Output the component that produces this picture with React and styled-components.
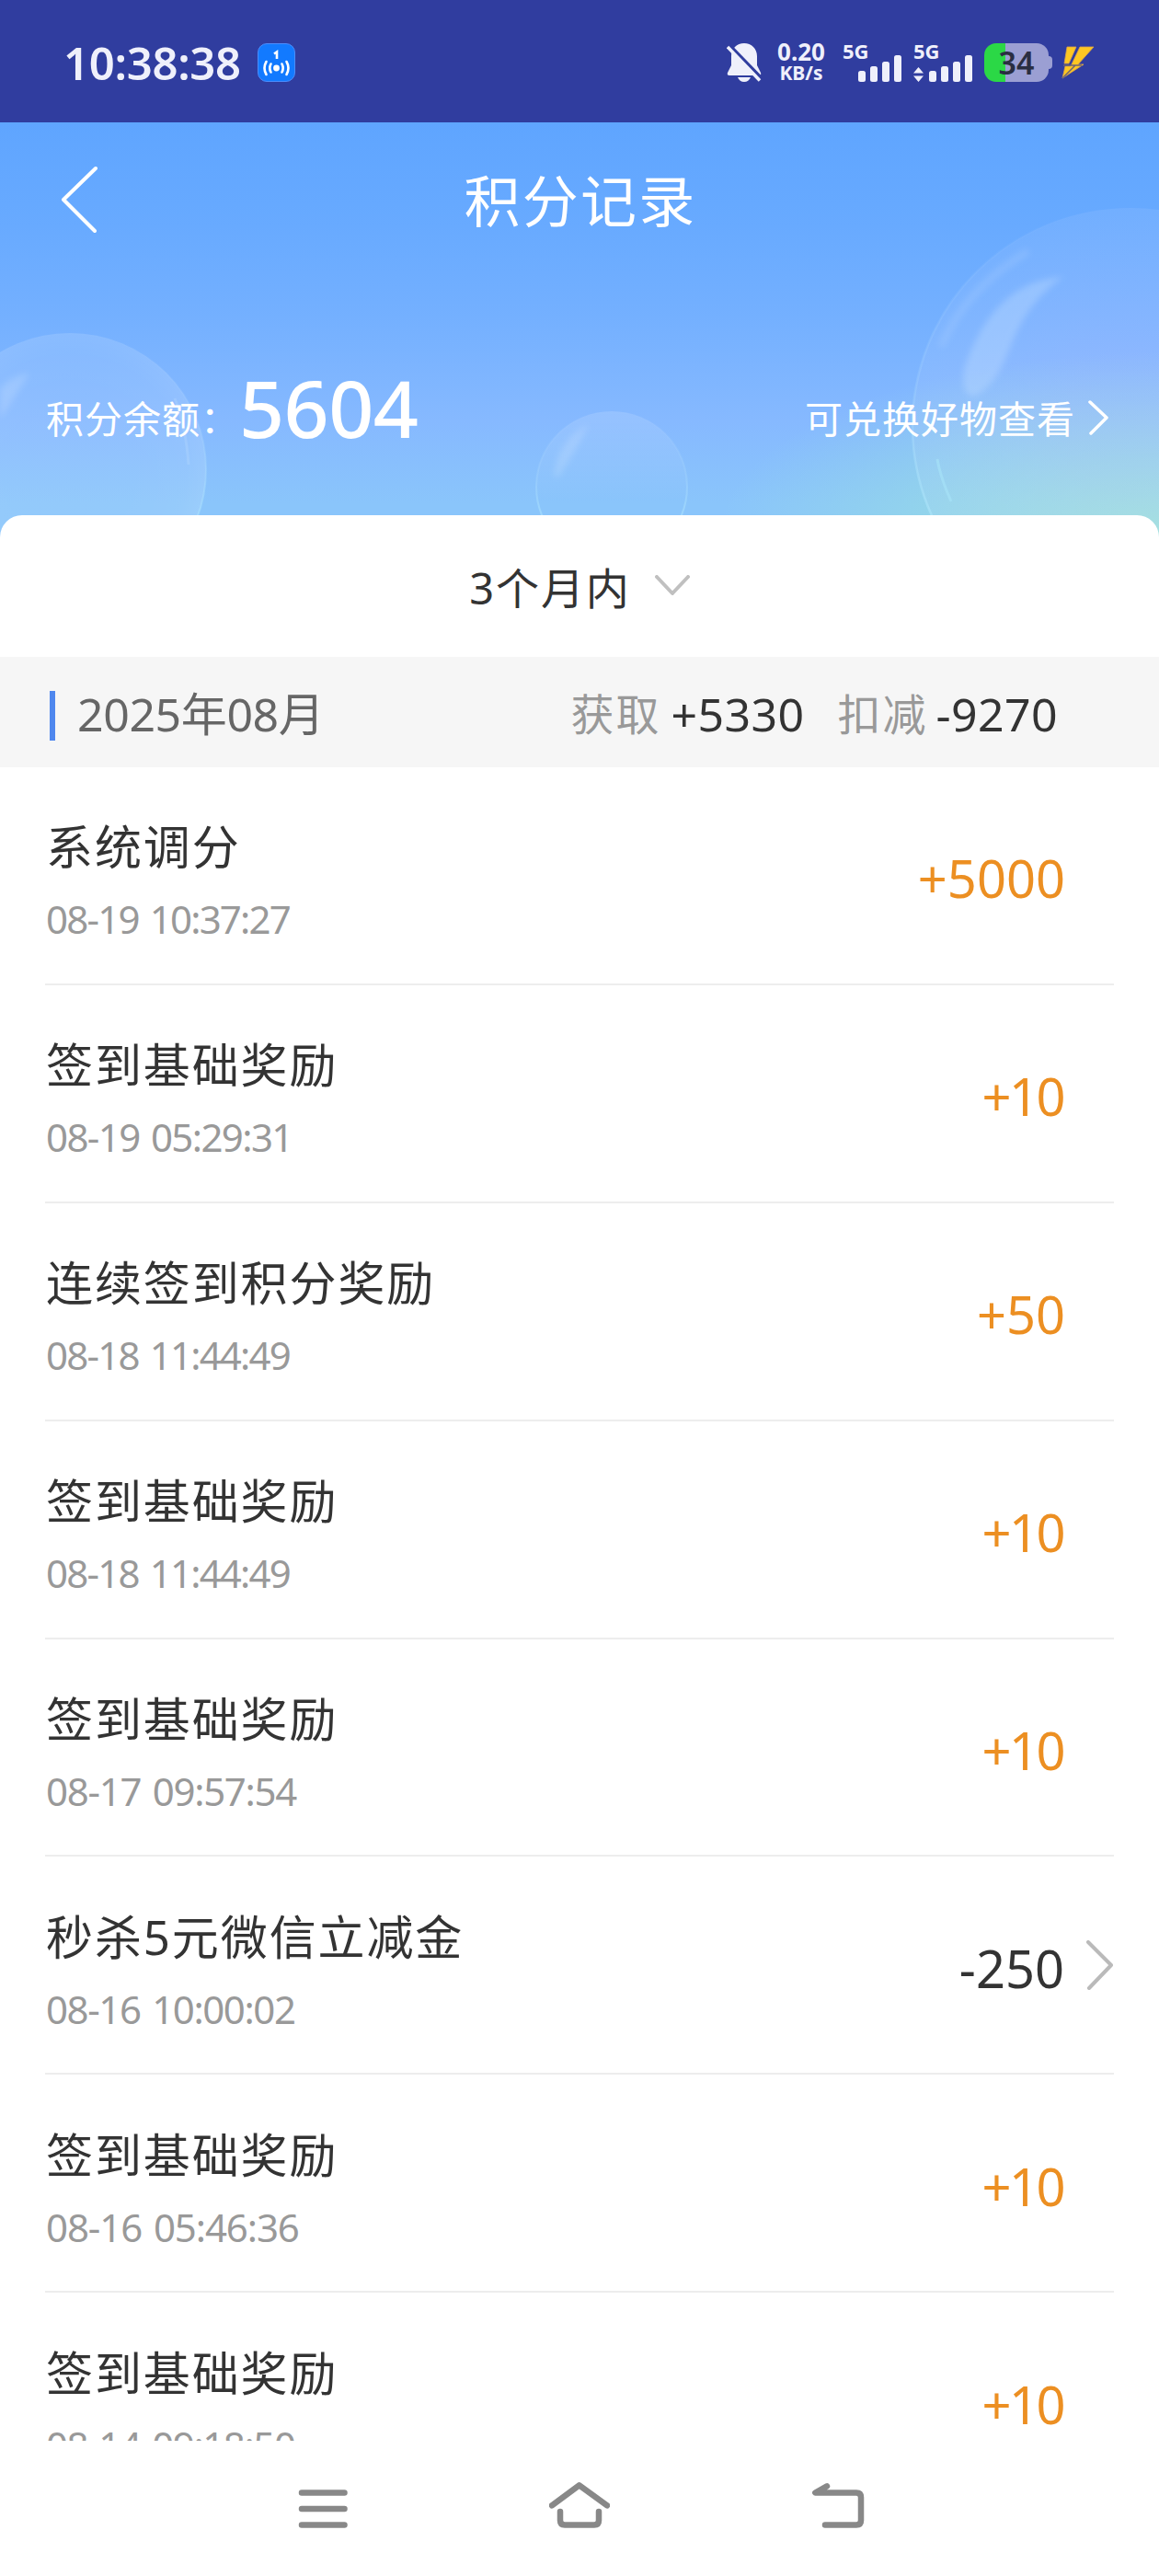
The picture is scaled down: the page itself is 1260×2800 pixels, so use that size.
import React from 'react';
import styled, { createGlobalStyle } from 'styled-components';

const GlobalStyle = createGlobalStyle`
  * { box-sizing: border-box; }
  body {
    margin: 0;
    background: #fff;
    font-family: "Noto Sans", "Noto Sans CJK SC", sans-serif;
    color: #333;
  }
  svg { display: block; flex: none; }
`

const Phone = styled.div`
  width: 1260px;
  height: 2800px;
  display: flex;
  flex-direction: column;
  overflow: hidden;
  background: #fdfdfd;
`

const StatusBar = styled.div`
  height: 133px;
  flex: none;
  display: flex;
  align-items: center;
  padding: 3px 70px 0 69px;
  background: #303d9f;
  color: #eff0fb;
`

const Clock = styled.div`
  width: 211px;
  font-size: 49px;
  font-weight: 600;
  line-height: 60px;
  letter-spacing: -0.3px;
  white-space: nowrap;
`

const AppBadge = styled.div`
  width: 41px;
  height: 42px;
  border-radius: 10px;
  background: #127aff;
  border: 1px solid #4c8dfc;
`

const StatusIcons = styled.div`
  margin-left: auto;
  display: flex;
  align-items: center;
`

const Speed = styled.div`
  width: 56px;
  margin-left: 15px;
  display: flex;
  flex-direction: column;
  align-items: center;
  font-weight: 700;
  white-space: nowrap;
`

const SpeedValue = styled.span`
  height: 22px;
  font-size: 26px;
  line-height: 21px;
`

const SpeedUnit = styled.span`
  height: 22px;
  font-size: 21px;
  line-height: 23px;
`

const Signal = styled.div`
  position: relative;
  width: ${props => props.$width}px;
  height: 44px;
  margin-left: ${props => props.$gap}px;
  svg { position: absolute; left: 0; top: 1px; }
`

const SignalLabel = styled.span`
  position: absolute;
  left: 0;
  top: -1px;
  font-size: 22px;
  font-weight: 700;
  line-height: 20px;
`

const Battery = styled.div`
  position: relative;
  width: 70px;
  height: 42px;
  margin-left: 13px;
  border-radius: 13px;
  background: linear-gradient(90deg, #2bd846 23px, #9b9fd3 23px);
  color: #2a2e42;
  font-size: 34px;
  font-weight: 600;
  line-height: 42px;
  text-align: center;
  &::after {
    content: "";
    position: absolute;
    right: -4px;
    top: 14px;
    width: 5px;
    height: 14px;
    border-radius: 0 4px 4px 0;
    background: #9b9fd3;
  }
`

const Header = styled.div`
  position: relative;
  height: 451px;
  flex: none;
  display: flex;
  flex-direction: column;
  background:
    radial-gradient(ellipse 480px 200px at 1260px 450px, rgba(158, 232, 214, 0.9), rgba(158, 232, 214, 0)),
    linear-gradient(180deg, #5fa5ff 0%, #68aaff 25%, #74b0ff 47%, #86b9ff 72%, #8ac5fb 92%);
`

const Bubbles = styled.svg`
  position: absolute;
  left: 0;
  top: 0;
`

const TitleBar = styled.div`
  position: relative;
  height: 172px;
  display: flex;
  align-items: center;
  padding: 0 65px;
  color: #fff;
`

const BackButton = styled.span`
  margin-top: -4px;
`

const Title = styled.div`
  flex: 1;
  margin-right: 39px;
  text-align: center;
  font-size: 61px;
  line-height: 80px;
  letter-spacing: 2.2px;
`

const Balance = styled.div`
  position: relative;
  margin-top: 88px;
  height: 100px;
  display: flex;
  align-items: center;
  padding: 0 54px 0 50px;
  color: #fff;
  line-height: 100px;
  white-space: nowrap;
`

const BalanceLabel = styled.span`
  width: 210px;
  padding-top: 24px;
  font-size: 41px;
  letter-spacing: 1px;
`

const BalanceValue = styled.span`
  font-size: 86px;
  font-weight: 550;
  letter-spacing: -0.6px;
`

const GoodsLink = styled.a`
  margin-left: auto;
  padding-top: 24px;
  display: flex;
  align-items: center;
  font-size: 41px;
  letter-spacing: 1px;
  svg { margin: -2px 0 0 14px; }
`

const Card = styled.div`
  position: relative;
  flex: 1;
  min-height: 0;
  margin-top: -24px;
  display: flex;
  flex-direction: column;
  border-radius: 24px 24px 0 0;
  background: #fff;
  overflow: hidden;
`

const Filter = styled.div`
  height: 154px;
  flex: none;
  display: flex;
  align-items: center;
  justify-content: center;
  padding-top: 3px;
  font-size: 47px;
  letter-spacing: 1.9px;
  line-height: 60px;
  svg { margin: -3px 0 0 26px; }
`

const MonthBar = styled.div`
  height: 120px;
  flex: none;
  display: flex;
  align-items: center;
  padding: 3px 110px 0 54px;
  background: #f6f6f6;
  font-size: 50px;
  line-height: 60px;
  white-space: nowrap;
`

const Marker = styled.span`
  width: 6px;
  height: 54px;
  flex: none;
  margin: 5px 24px 0 0;
  background: #4f87ee;
`

const Month = styled.span`
  color: #666;
  letter-spacing: -0.4px;
`

const Total = styled.span`
  display: flex;
  margin-left: ${props => props.$push ? 'auto' : '36px'};
  color: #333;
`

const TotalLabel = styled.span`
  width: ${props => props.$width}px;
  font-size: 47px;
  letter-spacing: 2px;
  color: #999;
`

const TotalValue = styled.span`
  letter-spacing: 0.4px;
`

const List = styled.div`
  flex: 1;
  min-height: 0;
  overflow: hidden;
  padding: 0 49px 0 49px;
`

const Row = styled.div`
  height: 236.9px;
  display: flex;
  align-items: center;
  border-bottom: 2px solid #ededed;
`

const RowText = styled.div`
  flex: 1;
  height: 127px;
  margin-top: 15px;
  padding-left: 1px;
  display: flex;
  flex-direction: column;
  justify-content: space-between;
`

const RowTitle = styled.div`
  height: 50px;
  font-size: 51px;
  line-height: 50px;
  letter-spacing: 1.9px;
  white-space: nowrap;
`

const RowDate = styled.div`
  height: 46px;
  font-size: 42px;
  line-height: 46px;
  letter-spacing: ${props => props.$tracking}px;
  word-spacing: 3px;
  color: #999;
  white-space: nowrap;
`

const Amount = styled.div`
  padding-top: 6px;
  margin-right: ${props => props.$spent ? 24 : props.$tight ? 55 : 53}px;
  font-size: 56px;
  line-height: 60px;
  letter-spacing: ${props => props.$tight ? -2.5 : 0}px;
  color: ${props => props.$spent ? '#333' : '#ec8f22'};
`

const NavBar = styled.div`
  height: 147px;
  flex: none;
  display: flex;
  justify-content: center;
  align-items: center;
  gap: 219px;
  padding-left: 5px;
  background: #fff;
`

const records = [
  { title: '系统调分', date: '08-19 10:37:27', amount: '+5000', tracking: -1.8 },
  { title: '签到基础奖励', date: '08-19 05:29:31', amount: '+10', tracking: -1.6 },
  { title: '连续签到积分奖励', date: '08-18 11:44:49', amount: '+50', tracking: -1.8 },
  { title: '签到基础奖励', date: '08-18 11:44:49', amount: '+10', tracking: -1.8 },
  { title: '签到基础奖励', date: '08-17 09:57:54', amount: '+10', tracking: -1.3 },
  { title: '秒杀5元微信立减金', date: '08-16 10:00:02', amount: '-250', tracking: -1.4 },
  { title: '签到基础奖励', date: '08-16 05:46:36', amount: '+10', tracking: -1.1 },
  { title: '签到基础奖励', date: '08-14 09:18:50', amount: '+10', tracking: -1.4 },
]

const Chevron = ({ width, height, points, color, weight }) => (
  <svg width={width} height={height} fill="none" stroke={color} strokeWidth={weight} strokeLinecap="round" strokeLinejoin="round">
    <polyline points={points} />
  </svg>
)

const Bars = ({ x, width, arrows }) => (
  <svg width={width} height="43" fill="#eff0fb">
    <rect x={x} y="30" width="8" height="12" rx="2.5" />
    <rect x={x + 13} y="25" width="8" height="17" rx="2.5" />
    <rect x={x + 26} y="20" width="8" height="22" rx="2.5" />
    <rect x={x + 39} y="13" width="8" height="29" rx="2.5" />
    {arrows && <path d="M0 32.5 5.500 26 11 32.500zM0 35.500h11L5.500 42z" />}
  </svg>
)

const Status = () => (
  <StatusBar>
    <Clock>10:38:38</Clock>
    <AppBadge>
      <svg width="39" height="40" viewBox="0 0 39 40" fill="none" stroke="#fff" strokeWidth="2.600" strokeLinecap="round">
        <path d="M17 10.500 20 8.500V16" strokeLinecap="butt" />
        <circle cx="19.500" cy="26" r="3.400" fill="#fff" stroke="none" />
        <path d="M13.500 21.500q-2.400 4.500 0 9M25.500 21.500q2.400 4.500 0 9M8.500 19q-4 7 0 14M30.500 19q4 7 0 14" />
      </svg>
    </AppBadge>
    <StatusIcons>
      <svg width="38" height="44" viewBox="0 0 38 44">
        <path fill="#eff0fb" d="M19 1C11 1 5 7 5 15v10L1 33q-1 3 2 3h32q3 0 2-3l-4-8V15C33 7 27 1 19 1zM12 38h14q-2 5-7 5t-7-5z" />
        <path stroke="#303d9f" strokeWidth="3.500" d="M2 2 38 39" />
        <path stroke="#eff0fb" strokeWidth="3.500" d="M1 5 36 41.500" />
      </svg>
      <Speed>
        <SpeedValue>0.20</SpeedValue>
        <SpeedUnit>KB/s</SpeedUnit>
      </Speed>
      <Signal $width={64} $gap={17}>
        <SignalLabel>5G</SignalLabel>
        <Bars x={17} width={64} />
      </Signal>
      <Signal $width={64} $gap={13}>
        <SignalLabel>5G</SignalLabel>
        <Bars x={17} width={64} arrows />
      </Signal>
      <Battery>34</Battery>
      <svg width="50" height="38" viewBox="-14 0 50 38">
        <path fill="#fdc722" stroke="#d9a24a" strokeWidth="0.800" d="M6 2H16L8 20H3zM20 2H35L18 21H24L1 36 4 23H10z" />
        <path stroke="#6f6473" strokeWidth="1.500" d="M2 22H22M1 36 15 22" />
      </svg>
    </StatusIcons>
  </StatusBar>
)

const HeaderBubbles = () => (
  <Bubbles width="1260" height="451" fill="none">
    <defs>
      <radialGradient id="bubble">
        <stop offset="0.500" stopColor="#fff" stopOpacity="0.080" />
        <stop offset="0.850" stopColor="#fff" stopOpacity="0.100" />
        <stop offset="1" stopColor="#fff" stopOpacity="0.140" />
      </radialGradient>
      <linearGradient id="smallBubble" x1="0" y1="0" x2="0" y2="1">
        <stop offset="0" stopColor="#fff" stopOpacity="0.140" />
        <stop offset="0.600" stopColor="#fff" stopOpacity="0" />
      </linearGradient>
      <radialGradient id="bigBubble">
        <stop offset="0.300" stopColor="#d0c4ff" stopOpacity="0.200" />
        <stop offset="1" stopColor="#d8e0ff" stopOpacity="0.100" />
      </radialGradient>
      <linearGradient id="rim" x1="0" y1="0" x2="0" y2="1">
        <stop offset="0" stopColor="#c5e0ff" stopOpacity="0" />
        <stop offset="0.400" stopColor="#b5e2ff" stopOpacity="0.200" />
        <stop offset="0.700" stopColor="#b5ecff" stopOpacity="0.450" />
      </linearGradient>
      <filter id="soft" x="-30%" y="-30%" width="160%" height="160%"><feGaussianBlur stdDeviation="3.500" /></filter>
    </defs>
    <circle cx="76" cy="377" r="148" fill="url(#bubble)" stroke="url(#rim)" strokeWidth="2" />
    <path d="M0 290Q8 278 32 272 16 300 0 322z" fill="#fff" opacity="0.150" filter="url(#soft)" />
    <path d="M190 300Q202 330 205 372" stroke="#b8dcff" strokeWidth="3" opacity="0.300" />
    <circle cx="665" cy="396" r="82" fill="url(#smallBubble)" stroke="url(#rim)" strokeWidth="2" />
    <path d="M602 385Q606 345 640 328 627 355 607 386z" fill="#fff" opacity="0.150" filter="url(#soft)" />
    <circle cx="1229" cy="330" r="237" fill="url(#bigBubble)" stroke="url(#rim)" strokeWidth="2.500" />
    <path d="M1023 244Q1050 180 1118 140" stroke="#b4d4ff" strokeWidth="8" opacity="0.250" filter="url(#soft)" />
    <path d="M1156 168Q1080 172 1048 268 1044 296 1058 298 1080 290 1096 250 1116 194 1156 168z" fill="#c4e0ff" opacity="0.350" filter="url(#soft)" />
    <path d="M1019 366Q1022 385 1034 412" stroke="#a9e4f8" strokeWidth="3" opacity="0.600" />
  </Bubbles>
)

class PointsRecord extends React.Component {
  render() {
    return (
      <Phone>
        <GlobalStyle />
        <Status />
        <Header>
          <HeaderBubbles />
          <TitleBar>
            <BackButton>
              <Chevron width={41} height={74} points="39,3 4,37 38,71" color="#fff" weight={4} />
            </BackButton>
            <Title>积分记录</Title>
          </TitleBar>
          <Balance>
            <BalanceLabel>积分余额：</BalanceLabel>
            <BalanceValue>5604</BalanceValue>
            <GoodsLink>
              可兑换好物查看
              <Chevron width={23} height={38} points="2,2 20,19 3,36" color="#fff" weight={3.5} />
            </GoodsLink>
          </Balance>
        </Header>
        <Card>
          <Filter>
            3个月内
            <Chevron width={38} height={24} points="2,2 19,20 36,2" color="#c0c0c0" weight={4} />
          </Filter>
          <MonthBar>
            <Marker />
            <Month>2025年08月</Month>
            <Total $push>
              <TotalLabel $width={109}>获取</TotalLabel>
              <TotalValue>+5330</TotalValue>
            </Total>
            <Total>
              <TotalLabel $width={107}>扣减</TotalLabel>
              <TotalValue>-9270</TotalValue>
            </Total>
          </MonthBar>
          <List>
            {records.map((item, i) => {
              const spent = item.amount[0] === '-'
              return (
                <Row key={i}>
                  <RowText>
                    <RowTitle>{item.title}</RowTitle>
                    <RowDate $tracking={item.tracking}>{item.date}</RowDate>
                  </RowText>
                  <Amount $spent={spent} $tight={item.amount === '+10'}>{item.amount}</Amount>
                  {spent && <Chevron width={30} height={54} points="2,2 27,27 3,52" color="#bababa" weight={4} />}
                </Row>
              )
            })}
          </List>
          <NavBar>
            <svg width="54" height="60" viewBox="323 2697 54 60" fill="none" stroke="#888" strokeWidth="6.500" strokeLinecap="round">
              <path d="M327 2709.500H373.500M327 2727H373.500M327 2744.500H373.500" />
            </svg>
            <svg width="66" height="60" viewBox="597 2697 66 60" fill="none" stroke="#888" strokeWidth="6.500" strokeLinecap="round" strokeLinejoin="round">
              <path d="M600 2723.300 629.700 2701.300 660 2723.300M609 2730V2739.500Q609 2744.500 614 2744.500H646Q651 2744.500 651 2739.500V2730" />
            </svg>
            <svg width="60" height="60" viewBox="881 2697 60 60" fill="none" stroke="#888" strokeWidth="6.500" strokeLinecap="round" strokeLinejoin="round">
              <path d="M898 2702.300 885.300 2709.500H930Q935 2709.500 935 2714.500V2739.500Q935 2744.500 930 2744.500H896" />
            </svg>
          </NavBar>
        </Card>
      </Phone>
    )
  }
}

export default PointsRecord;
